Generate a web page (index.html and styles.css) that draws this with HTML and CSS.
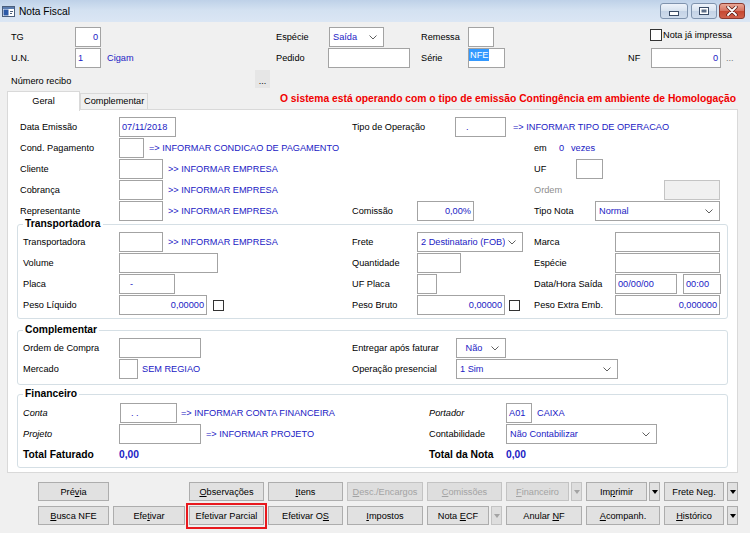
FILE: index.html
```html
<!DOCTYPE html>
<html lang="pt-BR">
<head>
<meta charset="utf-8">
<title>Nota Fiscal</title>
<link rel="stylesheet" href="styles.css">
</head>
<body>
<div class="window">
  <div class="titlebar">
    <svg class="appicon" width="13" height="11" viewBox="0 0 13 11">
      <rect x="0.5" y="0.5" width="12" height="10" fill="#ffffff" stroke="#4b5f7c"/>
      <rect x="1" y="1" width="11" height="2" fill="#5b7db0"/>
      <rect x="1.5" y="3.5" width="5" height="6" fill="#2c5aa8"/>
      <rect x="8" y="5" width="3" height="1" fill="#4b5f7c"/>
      <rect x="8" y="7" width="2" height="1" fill="#4b5f7c"/>
    </svg>
    <span class="title">Nota Fiscal</span>
    <div class="wctrls">
      <span class="wbtn wmin"><svg width="10" height="5" viewBox="0 0 10 5"><rect x="0.5" y="0.5" width="9" height="4" fill="#fff" stroke="#3a4c66"/></svg></span>
      <span class="wbtn wmax"><svg width="10" height="8" viewBox="0 0 10 8"><rect x="0.5" y="0.5" width="9" height="7" fill="#fff" stroke="#3a4c66"/><rect x="2.5" y="2.5" width="5" height="3" fill="#5d6f88"/></svg></span>
      <span class="wbtn wclose"><svg width="12" height="10" viewBox="0 0 12 10"><path d="M2 1 L10 9 M10 1 L2 9" stroke="#5a1f18" stroke-width="3.4" stroke-linecap="round"/><path d="M2 1 L10 9 M10 1 L2 9" stroke="#ffffff" stroke-width="1.8" stroke-linecap="round"/></svg></span>
    </div>
  </div>

  <div class="head">
    <div class="hrow">
      <span class="lbl w64">TG</span>
      <span class="tb w26 r">0</span>
      <span class="lbl w53 ml175">Espécie</span>
      <span class="cb w55"><span class="cbt">Saída</span><svg class="chev" width="8" height="5" viewBox="0 0 8 5"><path d="M0.5 0.5 L4 4 L7.5 0.5" fill="none" stroke="#606060"/></svg></span>
      <span class="lbl w47 ml37">Remessa</span>
      <span class="tb w26"></span>
      <span class="chk ml156"><span class="chkbox"></span>Nota já impressa</span>
    </div>
    <div class="hrow">
      <span class="lbl w64">U.N.</span>
      <span class="tb w26">1</span>
      <span class="info cigam">Cigam</span>
      <span class="lbl w52">Pedido</span>
      <span class="tb w82"></span>
      <span class="lbl w47 ml11">Série</span>
      <span class="tb w37 sel"><span class="selected">NFE</span></span>
      <span class="lbl w23 ml123">NF</span>
      <span class="tb w70 r">0</span>
      <span class="dots">...</span>
    </div>
    <div class="hrow recibo">
      <span class="lbl w244">Número recibo</span>
      <span class="ellipsis-btn">...</span>
    </div>
  </div>

  <div class="tabsrow">
    <span class="tab active">Geral</span>
    <span class="tab">Complementar</span>
    <span class="warn">O sistema está operando com o tipo de emissão Contingência em ambiente de Homologação</span>
  </div>

  <div class="panel">
    <div class="sec1">
      <div class="row3">
        <div class="cell"><span class="lbl w99">Data Emissão</span><span class="tb w57">07/11/2018</span></div>
        <div class="cell"><span class="lbl w103">Tipo de Operação</span><span class="tb w51 pl10">.</span><span class="info ml7">=&gt; INFORMAR TIPO DE OPERACAO</span></div>
        <div class="cell"></div>
      </div>
      <div class="row3">
        <div class="cell"><span class="lbl w99">Cond. Pagamento</span><span class="tb w25"></span><span class="info ml5">=&gt; INFORMAR CONDICAO DE PAGAMENTO</span></div>
        <div class="cell"></div>
        <div class="cell"><span class="lbl w25">em</span><span class="info w12">0</span><span class="info">vezes</span></div>
      </div>
      <div class="row3">
        <div class="cell"><span class="lbl w99">Cliente</span><span class="tb w44"></span><span class="info ml5">&gt;&gt; INFORMAR EMPRESA</span></div>
        <div class="cell"></div>
        <div class="cell"><span class="lbl w42">UF</span><span class="tb w27"></span></div>
      </div>
      <div class="row3">
        <div class="cell"><span class="lbl w99">Cobrança</span><span class="tb w44"></span><span class="info ml5">&gt;&gt; INFORMAR EMPRESA</span></div>
        <div class="cell"></div>
        <div class="cell"><span class="lbl w130 grey">Ordem</span><span class="tb w56 disabled"></span></div>
      </div>
      <div class="row3">
        <div class="cell"><span class="lbl w99">Representante</span><span class="tb w44"></span><span class="info ml5">&gt;&gt; INFORMAR EMPRESA</span></div>
        <div class="cell"><span class="lbl w65">Comissão</span><span class="tb w57 r">0,00%</span></div>
        <div class="cell"><span class="lbl w61">Tipo Nota</span><span class="cb w125"><span class="cbt">Normal</span><svg class="chev" width="8" height="5" viewBox="0 0 8 5"><path d="M0.5 0.5 L4 4 L7.5 0.5" fill="none" stroke="#606060"/></svg></span></div>
      </div>
    </div>

    <fieldset class="grp transp">
      <legend>Transportadora</legend>
      <div class="rowg">
        <div class="cell"><span class="lbl w96">Transportadora</span><span class="tb w44"></span><span class="info ml5">&gt;&gt; INFORMAR EMPRESA</span></div>
        <div class="cell"><span class="lbl w65">Frete</span><span class="cb w106"><span class="cbt">2 Destinatario (FOB)</span><svg class="chev" width="8" height="5" viewBox="0 0 8 5"><path d="M0.5 0.5 L4 4 L7.5 0.5" fill="none" stroke="#606060"/></svg></span></div>
        <div class="cell"><span class="lbl w81">Marca</span><span class="tb w105"></span></div>
      </div>
      <div class="rowg">
        <div class="cell"><span class="lbl w96">Volume</span><span class="tb w99"></span></div>
        <div class="cell"><span class="lbl w65">Quantidade</span><span class="tb w44"></span></div>
        <div class="cell"><span class="lbl w81">Espécie</span><span class="tb w105"></span></div>
      </div>
      <div class="rowg">
        <div class="cell"><span class="lbl w96">Placa</span><span class="tb w56 pl10">-</span></div>
        <div class="cell"><span class="lbl w65">UF Placa</span><span class="tb w20"></span></div>
        <div class="cell"><span class="lbl w81">Data/Hora Saída</span><span class="tb w62">00/00/00</span><span class="tb w38 ml6">00:00</span></div>
      </div>
      <div class="rowg">
        <div class="cell"><span class="lbl w96">Peso Líquido</span><span class="tb w88 r">0,00000</span><span class="sq ml6"></span></div>
        <div class="cell"><span class="lbl w65">Peso Bruto</span><span class="tb w88 r">0,00000</span><span class="sq ml4"></span></div>
        <div class="cell"><span class="lbl w81">Peso Extra Emb.</span><span class="tb w105 r">0,000000</span></div>
      </div>
    </fieldset>

    <fieldset class="grp compl">
      <legend>Complementar</legend>
      <div class="rowc">
        <div class="cell"><span class="lbl w96">Ordem de Compra</span><span class="tb w82"></span></div>
        <div class="cell"><span class="lbl w104">Entregar após faturar</span><span class="cb w50"><span class="cbt center">Não</span><svg class="chev" width="8" height="5" viewBox="0 0 8 5"><path d="M0.5 0.5 L4 4 L7.5 0.5" fill="none" stroke="#606060"/></svg></span></div>
      </div>
      <div class="rowc">
        <div class="cell"><span class="lbl w96">Mercado</span><span class="tb w19"></span><span class="info ml4">SEM REGIAO</span></div>
        <div class="cell"><span class="lbl w104">Operação presencial</span><span class="cb w162"><span class="cbt">1 Sim</span><svg class="chev" width="8" height="5" viewBox="0 0 8 5"><path d="M0.5 0.5 L4 4 L7.5 0.5" fill="none" stroke="#606060"/></svg></span></div>
      </div>
    </fieldset>

    <fieldset class="grp fin">
      <legend>Financeiro</legend>
      <div class="rowf">
        <div class="cell"><span class="lbl w96 it">Conta</span><span class="tb w57 ml1 pl10">. .</span><span class="info ml4">=&gt; INFORMAR CONTA FINANCEIRA</span></div>
        <div class="cell"><span class="lbl w77 it">Portador</span><span class="tb w26">A01</span><span class="info ml5">CAIXA</span></div>
      </div>
      <div class="rowf">
        <div class="cell"><span class="lbl w96 it">Projeto</span><span class="tb w82"></span><span class="info ml5">=&gt; INFORMAR PROJETO</span></div>
        <div class="cell"><span class="lbl w77">Contabilidade</span><span class="cb w151"><span class="cbt">Não Contabilizar</span><svg class="chev" width="8" height="5" viewBox="0 0 8 5"><path d="M0.5 0.5 L4 4 L7.5 0.5" fill="none" stroke="#606060"/></svg></span></div>
      </div>
      <div class="rowf">
        <div class="cell"><span class="lbl w96 b">Total Faturado</span><span class="info b">0,00</span></div>
        <div class="cell"><span class="lbl w77 b">Total da Nota</span><span class="info b">0,00</span></div>
      </div>
    </fieldset>
  </div>

  <div class="buttons">
    <div class="bc"><span class="btn"><span>Pré<u>v</u>ia</span></span></div>
    <div class="bc"></div>
    <div class="bc"><span class="btn"><span><u>O</u>bservações</span></span></div>
    <div class="bc"><span class="btn"><span><u>I</u>tens</span></span></div>
    <div class="bc"><span class="btn dis"><span><u>D</u>esc./Encargos</span></span></div>
    <div class="bc"><span class="btn dis"><span><u>C</u>omissões</span></span></div>
    <div class="bc split"><span class="btn dis"><span><u>F</u>inanceiro</span></span><span class="btn arrow dis"><i></i></span></div>
    <div class="bc split"><span class="btn"><span>Im<u>p</u>rimir</span></span><span class="btn arrow"><i></i></span></div>
    <div class="bc split wide"><span class="btn"><span>Frete Neg.</span></span><span class="btn arrow"><i></i></span></div>

    <div class="bc"><span class="btn"><span><u>B</u>usca NFE</span></span></div>
    <div class="bc"><span class="btn"><span>Efe<u>t</u>ivar</span></span></div>
    <div class="bc mark"><span class="btn"><span>Efetivar Parcial</span></span><span class="redbox"></span></div>
    <div class="bc"><span class="btn"><span>Efetivar O<u>S</u></span></span></div>
    <div class="bc"><span class="btn"><span><u>I</u>mpostos</span></span></div>
    <div class="bc split"><span class="btn"><span>Nota <u>E</u>CF</span></span><span class="btn arrow dis"><i></i></span></div>
    <div class="bc"><span class="btn"><span>Anular <u>N</u>F</span></span></div>
    <div class="bc"><span class="btn"><span><u>A</u>companh.</span></span></div>
    <div class="bc split wide"><span class="btn"><span><u>H</u>istórico</span></span><span class="btn arrow"><i></i></span></div>
  </div>
</div>
</body>
</html>
```
FILE: styles.css
```css
* { box-sizing: border-box; }
html, body { margin: 0; padding: 0; }
body {
  width: 750px;
  height: 533px;
  overflow: hidden;
  font-family: "Liberation Sans", Arial, sans-serif;
  font-size: 9.2px;
  color: #000;
  background: #f0f0f0;
}
.window { width: 750px; height: 533px; background: #f0f0f0; display: flex; flex-direction: column; }

/* title bar */
.titlebar {
  height: 22px;
  flex-shrink: 0;
  display: flex;
  align-items: center;
  padding-left: 2px;
  background: linear-gradient(to bottom, #bed1e8 0%, #d3e1f1 45%, #dbe6f4 100%);
}
.appicon { margin-right: 4px; }
.title { font-size: 10.2px; color: #000; }
.wctrls { margin-left: auto; margin-right: 5px; display: flex; align-self: flex-start; margin-top: 3px; }
.wbtn {
  width: 26px; height: 16px;
  border: 1px solid #7f93ad;
  border-radius: 3px;
  display: flex; align-items: center; justify-content: center;
  background: linear-gradient(to bottom, #eef3fa 0%, #d7e2ef 50%, #c4d3e6 51%, #cfdcec 100%);
}
.wmin { width: 28px; margin-right: 3px; }
.wmax { margin-right: 2px; }
.wmin svg { margin-top: 5px; }
.wclose {
  border-color: #8a3a30;
  background: linear-gradient(to bottom, #e9a796 0%, #d5705d 50%, #c64731 51%, #d0604a 100%);
}

/* generic */
.lbl { flex-shrink: 0; white-space: nowrap; line-height: 20px; }
.info { flex-shrink: 0; white-space: nowrap; color: #2121c4; line-height: 20px; }
.grey { color: #8e8e8e; }
.it { font-style: italic; }
.b { font-weight: bold; font-size: 10.3px; }
.tb {
  flex-shrink: 0;
  height: 20px;
  border: 1px solid #a3a3a3;
  background: #fff;
  color: #2121c4;
  line-height: 18px;
  padding: 0 2px;
  white-space: nowrap;
  overflow: hidden;
}
.tb.r { text-align: right; padding-right: 2px; }
.tb.disabled { background: #f0f0f0; border-color: #c4c4c4; }
.tb.sel { padding: 0; }
.selected { display: inline-block; background: #3399ff; color: #fff; line-height: 12px; padding: 0 1px; vertical-align: top; }
.cb {
  flex-shrink: 0;
  height: 20px;
  border: 1px solid #a3a3a3;
  background: #fff;
  color: #2121c4;
  display: flex;
  align-items: center;
  padding: 0 6px 0 3px;
}
.cbt { flex: 1; white-space: nowrap; overflow: hidden; line-height: 18px; }
.cbt.center { text-align: center; }
.chev { flex-shrink: 0; margin-left: 3px; }
.sq { flex-shrink: 0; width: 11px; height: 11px; border: 1px solid #333; background: #fff; }

/* widths & offsets */
.w12 { width: 12px; } .w19 { width: 19px; } .w20 { width: 20px; } .w23 { width: 23px; }
.w25 { width: 25px; } .w26 { width: 26px; } .w27 { width: 27px; } .w37 { width: 37px; }
.w38 { width: 38px; } .w42 { width: 42px; } .w44 { width: 44px; } .w47 { width: 47px; }
.w50 { width: 50px; } .w51 { width: 51px; } .w52 { width: 52px; } .w53 { width: 53px; }
.w55 { width: 55px; } .w56 { width: 56px; } .w57 { width: 57px; } .w61 { width: 61px; }
.w62 { width: 62px; } .w64 { width: 64px; } .w65 { width: 65px; } .w70 { width: 70px; }
.w77 { width: 77px; } .w81 { width: 81px; } .w82 { width: 82px; } .w88 { width: 88px; }
.w96 { width: 96px; } .w99 { width: 99px; } .w103 { width: 103px; } .w104 { width: 104px; }
.w105 { width: 105px; } .w106 { width: 106px; } .w125 { width: 125px; } .w130 { width: 130px; }
.w151 { width: 151px; } .w162 { width: 162px; } .w244 { width: 244px; }
.ml1 { margin-left: 1px; } .ml4 { margin-left: 4px; } .ml5 { margin-left: 5px; } .ml6 { margin-left: 6px; }
.ml7 { margin-left: 7px; } .ml11 { margin-left: 11px; } .ml37 { margin-left: 37px; }
.ml123 { margin-left: 123px; } .ml156 { margin-left: 156px; } .ml175 { margin-left: 175px; }
.pl10 { padding-left: 10px; }

/* header */
.head { padding: 5px 0 0 11px; height: 69px; flex-shrink: 0; }
.hrow { display: flex; align-items: center; height: 20px; margin-bottom: 1px; }
.hrow.recibo { height: 18px; margin-top: 2px; }
.recibo .lbl { line-height: 18px; padding-top: 3px; }
.cigam { width: 169px; margin-left: 6px; }
.chk { display: flex; align-items: center; white-space: nowrap; margin-top: -4px; }
.chkbox { width: 12px; height: 12px; border: 1px solid #333; background: #fff; margin-right: 1px; }
.dots { margin-left: 5px; color: #7a7a7a; line-height: 14px; }
.ellipsis-btn {
  width: 15px; height: 18px;
  background: #e6e6e6;
  text-align: center;
  line-height: 22px;
  font-size: 9px;
}

/* tabs */
.tabsrow {
  height: 19px;
  flex-shrink: 0;
  display: flex;
  align-items: flex-start;
  padding: 0 14px 0 7px;
  position: relative;
  z-index: 1;
}
.tab {
  height: 16px;
  margin-top: 2px;
  padding: 0 3px;
  border: 1px solid #d9d9d9;
  border-bottom: none;
  background: #f0f0f0;
  line-height: 15px;
  white-space: nowrap;
}
.tab.active {
  width: 73px;
  height: 20px;
  margin-top: 0;
  background: #fff;
  text-align: center;
  line-height: 18px;
}
.warn {
  margin-left: auto;
  color: #f00000;
  font-weight: bold;
  font-size: 10.3px;
  line-height: 15px;
  white-space: nowrap;
}

/* panel */
.panel {
  margin: -1px 0 0 7px;
  width: 731px;
  height: 364px;
  flex-shrink: 0;
  background: #fff;
  border: 1px solid #d9d9d9;
  padding-top: 7px;
}
.sec1 { padding-left: 12px; display: grid; row-gap: 1px; }
.row3 { display: grid; grid-template-columns: 332px 182px 1fr; height: 20px; }
.cell { display: flex; align-items: center; min-width: 0; }

.grp {
  margin: 0 0 0 9px;
  width: 711px;
  border: 1px solid #d5dfe5;
  border-radius: 3px;
  padding: 3px 0 2px 5px;
  min-width: 0;
}
.grp legend {
  padding: 0 2px;
  font-weight: bold;
  font-size: 10.3px;
  line-height: 10px;
}
.transp { margin-top: -2px; }
.compl { margin-top: 6px; padding-bottom: 4px; }
.fin { margin-top: 4px; padding-top: 4px; padding-bottom: 1px; }
.rowg, .rowc, .rowf { display: grid; height: 20px; margin-bottom: 1px; }
.rowg { grid-template-columns: 329px 182px 1fr; }
.rowc { grid-template-columns: 329px 1fr; }
.rowf { grid-template-columns: 406px 1fr; }

/* buttons */
.buttons {
  margin-top: 9px;
  padding-left: 38px;
  display: grid;
  grid-template-columns: 71px 72px 75px 75px 76px 75px 76px 74px 74px;
  grid-auto-rows: 19px;
  column-gap: 4px;
  row-gap: 5px;
}
.bc { display: flex; gap: 2px; position: relative; }
.bc.wide { gap: 3px; }
.btn {
  flex: 1;
  height: 19px;
  border: 1px solid #adadad;
  background: #e1e1e1;
  display: flex;
  align-items: center;
  justify-content: center;
  white-space: nowrap;
}
.btn.dis { color: #a3a3a3; border-color: #c3c3c3; background: #dedede; }
.btn.arrow { flex: 0 0 11px; }
.btn.arrow i {
  width: 0; height: 0;
  border-left: 3.5px solid transparent;
  border-right: 3.5px solid transparent;
  border-top: 4px solid #000;
}
.btn.arrow.dis i { border-top-color: #a3a3a3; }
.redbox {
  position: absolute;
  left: -3px; top: -3px; right: -3px; bottom: -4px;
  border: 2px solid #e8191e;
}
```
